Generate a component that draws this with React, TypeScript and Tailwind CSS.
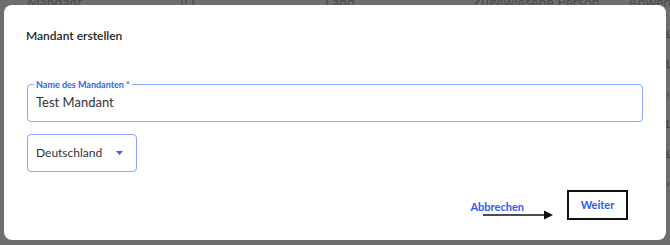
const headers = [
  { label: "Mandant", w: "w-[153px]" },
  { label: "ID", w: "w-[145px]" },
  { label: "Land", w: "w-[148px]" },
  { label: "Zugewiesene Person", w: "w-[155px]" },
  { label: "Anwendung", w: "" },
];

const peek = ["L", "L", "›", "L", "L", "›"];

export default function App() {
  return (
    <div
      className="relative h-[245px] w-[670px] overflow-hidden bg-[#6e6e6e]"
      style={{ fontFamily: "Lato, 'Noto Sans', sans-serif" }}
    >
      {/* table behind the modal */}
      <div className="-mt-[9px] flex whitespace-nowrap pl-[27px] text-[14px] text-[#4c4c4c]">
        {headers.map((h) => (
          <div key={h.label} className={`${h.w} shrink-0`}>
            {h.label}
          </div>
        ))}
      </div>
      <div className="ml-[666px] mt-[16px] flex flex-col gap-[18px] text-[11px] leading-[12px] text-[#3c3c3c]">
        {peek.map((p, i) => (
          <span key={i}>{p}</span>
        ))}
      </div>

      {/* modal */}
      <div className="absolute left-[4px] top-[5px] flex h-[235px] w-[662px] flex-col rounded-[8px] bg-white">
        <h2 className="pl-[22px] pt-[22px] text-[12px] font-semibold text-[#1f1f1f]">
          Mandant erstellen
        </h2>

        <div className="mt-[39px] flex flex-col gap-[12px] px-[23px]">
          <div className="relative flex h-[38px] items-center rounded-[4px] border-[1.5px] border-[#86a6ff] px-[8px]">
            <span className="absolute -top-[7px] left-[6px] bg-white px-[2px] text-[9px] font-bold text-[#2f63f0]">
              Name des Mandanten *
            </span>
            <span className="text-[13px] text-[#333]">Test Mandant</span>
          </div>

          <div className="flex h-[38px] w-[110px] items-center justify-between rounded-[4px] border-[1.5px] border-[#86a6ff] pl-[8px] pr-[13px]">
            <span className="text-[12px] text-[#333]">Deutschland</span>
            <svg width="7" height="4" viewBox="0 0 7 4" className="fill-[#2f63f0]">
              <path d="M0 0h7L3.5 4z" />
            </svg>
          </div>
        </div>

        <div className="mt-auto flex items-center justify-end gap-[43px] pb-[20px] pr-[38px]">
          <div className="relative">
            <button className="text-[11px] font-bold text-[#2a5cf5]">Abbrechen</button>
            <svg
              width="72"
              height="10"
              viewBox="0 0 72 10"
              className="absolute left-[13px] top-[17px]"
            >
              <line x1="0" y1="5" x2="64" y2="5" stroke="#111" strokeWidth="1.6" />
              <path d="M61 0.5L70 5L61 9.5z" fill="#111" />
            </svg>
          </div>
          <button className="flex h-[30px] w-[61px] items-center justify-center border-2 border-[#111] text-[11px] font-bold text-[#2a5cf5]">
            Weiter
          </button>
        </div>
      </div>
    </div>
  );
}
